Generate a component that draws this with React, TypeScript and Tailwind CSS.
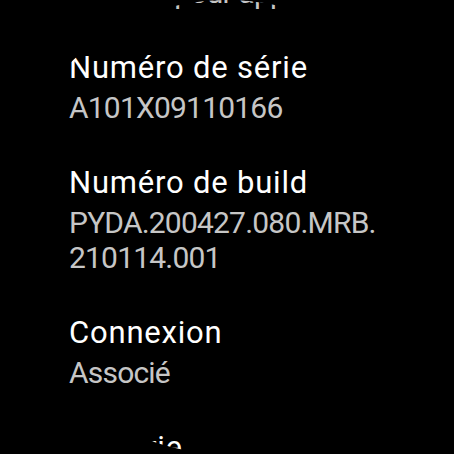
import React from "react";

const items = [
  { title: "Versions", value: ["Wear OS", "Android pour appareil"] },
  { title: "Numéro de série", value: ["A101X09110166"] },
  { title: "Numéro de build", value: ["PYDA.200427.080.MRB.", "210114.001"] },
  { title: "Connexion", value: ["Associé"] },
  { title: "Batterie", value: ["100 %"] },
];

export default function App() {
  return (
    <div className="w-[454px] h-[454px] bg-black overflow-hidden">
      <div
        className="w-[454px] h-[454px] rounded-full overflow-hidden bg-black"
        style={{ fontFamily: "Roboto, 'Noto Sans', sans-serif" }}
      >
        <div className="flex flex-col pl-[69px] pr-[10px] mt-[-99px]">
          {items.map((it, i) => (
            <div key={i} className="flex flex-col mb-[41px]">
              <div className="text-[31px] leading-[34px] tracking-[0.8px] text-white whitespace-nowrap">
                {it.title}
              </div>
              <div className="mt-[5px] flex flex-col">
                {it.value.map((v, j) => (
                  <div
                    key={j}
                    className="text-[30px] leading-[35px] tracking-[-0.8px] text-[#c6c6c6] whitespace-nowrap"
                  >
                    {v}
                  </div>
                ))}
              </div>
            </div>
          ))}
        </div>
      </div>
    </div>
  );
}
